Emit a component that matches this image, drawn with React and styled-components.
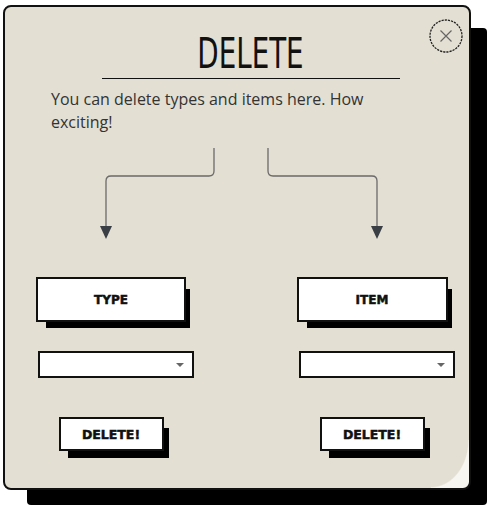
import React from 'react'
import styled, { createGlobalStyle } from 'styled-components'

const GlobalStyle = createGlobalStyle`
    body {
        margin: 0;
        background: #ffffff;
        font-family: "Open Sans", "Liberation Sans", sans-serif;
    }
`

const Page = styled.div`
    padding: 5px 20px 20px 3px;
`

const Card = styled.div`
    position: relative;
    width: 464px;
    padding: 23px 0 37px;
    border: 2px solid #111;
    border-radius: 8px;
    background:
        radial-gradient(ellipse 38px 48px at 0 0, #e3dfd3 97%, #f7f6f1 100%)
            no-repeat right bottom / 38px 48px,
        #e3dfd3;
    box-shadow: 20px 19px 0 -4px #000;
`

const CloseButton = styled.button`
    position: absolute;
    top: 12px;
    right: 6px;
    width: 34px;
    height: 34px;
    padding: 0;
    border: none;
    background: transparent;
    cursor: pointer;

    svg {
        display: block;
    }
`

const Header = styled.div`
    padding: 0 19px 0 46px;
`

const Title = styled.h1`
    width: 298px;
    margin: 0 auto;
    height: 48px;
    border-bottom: 1.5px solid #111;
    text-align: center;
    font-family: "DejaVu Sans", sans-serif;
    font-weight: normal;
    font-size: 42px;
    line-height: 48px;
    color: #111;

    span {
        display: inline-block;
        transform: scaleX(0.66);
    }
`

const Intro = styled.p`
    max-width: 350px;
    margin: 9px 0 0;
    font-size: 16px;
    line-height: 23px;
    color: #333;
`

const Arrows = styled.svg`
    display: block;
    margin-top: 13px;
`

const Columns = styled.div`
    display: grid;
    grid-template-columns: 156px 156px;
    column-gap: 105px;
    padding-left: 30px;
    margin-top: 37px;
`

const Column = styled.div`
    display: flex;
    flex-direction: column;
    align-items: center;
`

const Label = styled.div`
    width: ${p => p.$w}px;
    height: 45px;
    box-sizing: border-box;
    display: flex;
    align-items: center;
    justify-content: center;
    margin-right: 4px;
    border: 2px solid #111;
    background: #fff;
    box-shadow: 7px 9px 0 -3px #000;
    font-family: "DejaVu Sans", sans-serif;
    font-weight: bold;
    font-size: 12px;
    color: #111;
    -webkit-text-stroke: 0.5px #111;
`

const SelectBox = styled.div`
    position: relative;
    width: 156px;
    margin: 29px 0 0 6px;

    &::after {
        content: '';
        position: absolute;
        right: 10px;
        top: 12px;
        border-left: 4px solid transparent;
        border-right: 4px solid transparent;
        border-top: 4px solid #666;
        pointer-events: none;
    }
`

const Select = styled.select`
    display: block;
    width: 100%;
    height: 27px;
    box-sizing: border-box;
    border: 2px solid #111;
    border-radius: 0;
    background: #fff;
    appearance: none;
    font-family: "Open Sans", sans-serif;
    font-size: 13px;
`

const DeleteButton = styled.button`
    width: 105px;
    height: 34px;
    margin-top: 39px;
    margin-right: 4px;
    box-sizing: border-box;
    border: 2px solid #111;
    background: #fff;
    box-shadow: 7px 9px 0 -2px #000;
    font-family: "DejaVu Sans", sans-serif;
    font-weight: bold;
    font-size: 12.5px;
    color: #111;
    cursor: pointer;
    -webkit-text-stroke: 0.5px #111;
`

function CloseIcon() {
    return (
        <svg width="34" height="34" viewBox="0 0 34 34">
            <circle cx="17" cy="17" r="16" fill="none" stroke="#222" strokeWidth="1.3" strokeDasharray="2.2 1" />
            <path d="M11.5 11.5 L22.5 22.5 M22.5 11.5 L11.5 22.5" stroke="#666" strokeWidth="1.2" />
        </svg>
    )
}

function Section({ label, labelWidth }) {
    return (
        <Column>
            <Label $w={labelWidth}>{label}</Label>
            <SelectBox>
                <Select defaultValue="">
                    <option value=""></option>
                </Select>
            </SelectBox>
            <DeleteButton>DELETE!</DeleteButton>
        </Column>
    )
}

export default function App() {
    return (
        <Page>
            <GlobalStyle />
            <Card>
                <CloseButton aria-label="close">
                    <CloseIcon />
                </CloseButton>
                <Header>
                    <Title><span>DELETE</span></Title>
                    <Intro>You can delete types and items here. How exciting!</Intro>
                </Header>
                <Arrows width="464" height="93" viewBox="0 0 464 93">
                    <g fill="none" stroke="#6a6a6a" strokeWidth="1.3">
                        <path d="M209 1 V24 Q209 29 204 29 H106 Q101 29 101 34 V80" />
                        <path d="M263 1 V24 Q263 29 268 29 H367 Q372 29 372 34 V80" />
                    </g>
                    <g fill="#3a3e45">
                        <polygon points="95,79 107,79 101,92" />
                        <polygon points="366,79 378,79 372,92" />
                    </g>
                </Arrows>
                <Columns>
                    <Section label="TYPE" labelWidth={150} />
                    <Section label="ITEM" labelWidth={151} />
                </Columns>
            </Card>
        </Page>
    )
}
